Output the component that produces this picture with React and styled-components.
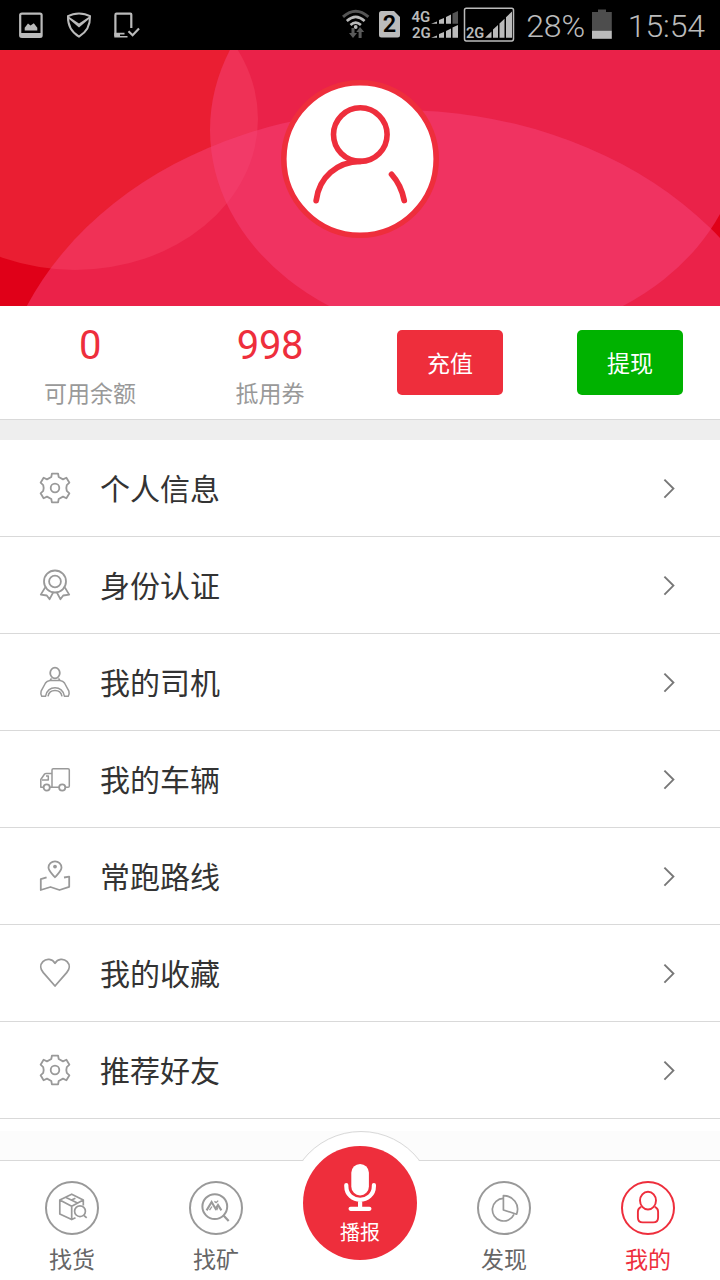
import React from 'react'
import styled, { createGlobalStyle } from 'styled-components'

const GlobalStyle = createGlobalStyle`
    * {
        box-sizing: border-box;
    }
    body {
        margin: 0;
        background-color: #fff;
        font-family: Roboto, 'Noto Sans CJK SC', sans-serif;
    }
    svg {
        display: block;
        flex: none;
    }
`

const Page = styled.div`
    width: 720px;
    height: 1280px;
    display: flex;
    flex-direction: column;
    overflow: hidden;
    background-color: #fff;
`

const StatusBar = styled.div`
    height: 50px;
    flex: none;
    display: flex;
    justify-content: space-between;
    padding: 0 15px 0 16px;
    background-color: #000;
    color: #bbb;
`

const StatusGroup = styled.div`
    display: flex;
    align-items: center;
    gap: 7px;
`

const StatusText = styled.span`
    width: ${props => props.$width}px;
    font-size: 32px;
    font-weight: 360;
    line-height: 50px;
    padding-top: 2px;
    text-align: right;
    white-space: nowrap;
    letter-spacing: -0.1px;
`

const Banner = styled.div`
    position: relative;
    height: 256px;
    flex: none;
    padding-top: 29px;
    display: flex;
    justify-content: center;
    align-items: flex-start;
    background-color: #e00018;
`

const BannerArt = styled.svg`
    position: absolute;
    top: 0;
    left: 0;
`

const Avatar = styled.div`
    position: relative;
    width: 158px;
    height: 160px;
`

const Account = styled.div`
    height: 114px;
    flex: none;
    display: grid;
    grid-template-columns: repeat(4, 180px);
    border-bottom: 1px solid #d9d9d9;
`

const Stat = styled.div`
    display: flex;
    flex-direction: column;
    align-items: center;
    padding-top: 16px;
    strong {
        font-size: 40px;
        font-weight: 400;
        line-height: 47px;
        letter-spacing: -0.3px;
        color: #ee2e3c;
    }
    span {
        margin-top: 9px;
        font-size: 23px;
        line-height: 34px;
        color: #999;
    }
`

const PayButton = styled.button`
    width: 106px;
    height: 65px;
    margin: 24px auto 0;
    padding: 4px 0 0;
    border: none;
    border-radius: 5px;
    background-color: ${props => props.$color};
    color: #fff;
    font-family: inherit;
    font-size: 23px;
    line-height: 61px;
`

const Spacer = styled.div`
    height: 20px;
    flex: none;
    background-color: #eee;
`

const MenuRow = styled.div`
    height: 97px;
    flex: none;
    display: flex;
    align-items: center;
    padding: 0 44px 0 39px;
    border-bottom: 1px solid #d9d9d9;
`

const MenuLabel = styled.span`
    flex: 1;
    margin-left: 29px;
    padding-top: 4px;
    font-size: 30px;
    line-height: 44px;
    color: #333;
`

const Shade = styled.div`
    height: 29px;
    margin-top: 12px;
    flex: none;
    background-color: #fcfcfc;
`

const TabBar = styled.div`
    position: relative;
    height: 120px;
    flex: none;
    display: grid;
    grid-template-columns: repeat(5, 144px);
    border-top: 1px solid #d9d9d9;
    background-color: #fff;
`

const Hump = styled.svg`
    position: absolute;
    left: 296px;
    top: -31px;
`

const Tab = styled.div`
    display: flex;
    flex-direction: column;
    align-items: center;
    padding-top: 20px;
    color: ${props => (props.$active ? '#ee2e3c' : '#666')};
    svg {
        color: ${props => (props.$active ? '#ee2e3c' : '#999')};
    }
    span {
        margin-top: 9px;
        font-size: 23px;
        line-height: 34px;
    }
`

const Broadcast = styled.div`
    position: relative;
    width: 114px;
    height: 114px;
    margin: -15px auto 0;
    border-radius: 50%;
    background-color: #ee2e3c;
    color: #fff;
    display: flex;
    flex-direction: column;
    align-items: center;
    span {
        margin-top: 2px;
        font-size: 20px;
        line-height: 30px;
    }
`

function LineIcon({ children }) {
    return (
        <svg width="32" height="32" viewBox="0 0 32 32" fill="none" stroke="#999" strokeWidth="1.8" strokeLinejoin="round">
            {children}
        </svg>
    )
}

const GearIcon = () => (
    <LineIcon>
        <path d="M12.9 1.7h6.2l.6 3.3 4.3 2.4 3.4-1.7 3 5-2.6 2.4q-1 2.9 0 5.8l2.6 2.4-3 5-3.4-1.7-4.3 2.4-.6 3.3h-6.2l-.6-3.3L8 24.6l-3.4 1.7-3-5 2.6-2.4q1-2.9 0-5.8l-2.6-2.4 3-5L8 7.4 12.3 5z" />
        <circle cx="16" cy="16" r="4.3" />
    </LineIcon>
)

const MedalIcon = () => (
    <LineIcon>
        <circle cx="16" cy="12.5" r="11" />
        <circle cx="16" cy="12.5" r="5.9" />
        <path d="M6.2 18.4 1.8 25.6l6 .9 2.8 3.7 3.6-6.9M25.8 18.4l4.4 7.2-6 .9-2.8 3.7-3.6-6.9" />
    </LineIcon>
)

const DriverIcon = () => (
    <LineIcon>
        <ellipse cx="16" cy="7" rx="4.8" ry="5.3" />
        <path d="M12.5 12.3 11 14.5Q7.8 14.8 6.5 17L2.1 25.2Q1.3 28 2.8 30.3H6.5C8 18.8 24 18.8 25.5 30.3h3.7Q30.7 28 29.9 25.2L25.5 17Q24.2 14.8 21 14.5L19.5 12.3M11 14.5h10M9 30.3C10.5 22.6 21.5 22.6 23 30.3" strokeWidth="1.5" />
    </LineIcon>
)

const TruckIcon = () => (
    <LineIcon>
        <path d="M4.7 24.3H1.8V16.5L5.6 11Q6.2 10.4 7.2 10.4H13M13 24.3V7Q13 5.7 14.3 5.7H29Q30.3 5.7 30.3 7V23Q30.3 24.3 29 24.3H26.4M10.8 24.3H20M7 13H9.3V17H3" strokeWidth="1.5" />
        <circle cx="7.7" cy="24.5" r="3.1" />
        <circle cx="23.2" cy="24.5" r="3.1" />
    </LineIcon>
)

const RouteIcon = () => (
    <LineIcon>
        <path d="M16 17.2C12.5 13 9.5 11 9.5 7.6A6.5 6.2 0 0 1 22.5 7.6C22.5 11 19.5 13 16 17.2zM7.6 17.3 1.8 19.2V30L11.5 27l9 3 9.7-3.2V16.6L25 17.5" />
        <circle cx="16" cy="6.6" r="1.9" fill="#999" stroke="none" />
    </LineIcon>
)

const HeartIcon = () => (
    <LineIcon>
        <path d="M16 6.3C13.3 1.6 7.3 1.2 3.9 4.6 1 7.6 1.1 12 4.3 15.6L16 29 27.7 15.6C30.9 12 31 7.6 28.1 4.6 24.7 1.2 18.7 1.6 16 6.3z" />
    </LineIcon>
)

const Chevron = () => (
    <svg width="14" height="22" viewBox="0 0 14 22" fill="none" stroke="#777" strokeWidth="1.9">
        <path d="M2.4 2.6 11.4 11.6 2.4 20.6" />
    </svg>
)

function TabIcon({ children }) {
    return (
        <svg width="54" height="54" viewBox="0 0 54 54" fill="none" stroke="currentColor" strokeWidth="1.7" strokeLinejoin="round">
            <circle cx="27" cy="27" r="26" strokeWidth="2" />
            {children}
        </svg>
    )
}

const CargoIcon = () => (
    <TabIcon>
        <path d="M38.3 24.5V19L26.7 13.2 14.8 19V33L26.7 38.6 30.5 36.8M14.8 19 26.7 25.2 38.3 19M26.7 25.2V38.6M20.5 16.2 32.5 22M26.6 19 30.4 17.2" />
        <circle cx="35" cy="30.2" r="5.4" />
        <path d="M39 34.5 41.7 36.8" />
    </TabIcon>
)

const MineIcon = () => (
    <TabIcon>
        <circle cx="25.8" cy="25.6" r="12.4" strokeWidth="2" />
        <path d="M34.3 34.3 39.7 40" strokeWidth="2.2" />
        <path d="M17.6 29.4 22.6 21 26.6 27.8 29 24 32.4 29.4" strokeWidth="2.1" strokeLinejoin="miter" />
        <path d="M20.5 29.2 23 25.5M27.6 29.2 28.8 26.5M25.4 20.4 27.2 21.6 29.2 19.6" strokeWidth="1.3" />
    </TabIcon>
)

const PieIcon = () => (
    <TabIcon>
        <path d="M26.4 17.4A11.3 11.3 0 1 0 37 33.3" />
        <path d="M26.4 29V14.6C36 14.6 43.2 23.5 39.6 33.2z" />
    </TabIcon>
)

const MeIcon = () => (
    <TabIcon>
        <ellipse cx="27" cy="19.6" rx="8" ry="8.9" strokeWidth="1.9" />
        <path d="M20.2 26C18 26.8 16.9 28.5 16.9 31V36.5Q16.9 41.4 21.8 41.4H32.2Q37.1 41.4 37.1 36.5V31C37.1 28.5 36 26.8 33.8 26" strokeWidth="1.9" />
    </TabIcon>
)

const MicIcon = () => (
    <svg width="114" height="70" viewBox="0 0 114 70" fill="none" stroke="#fff" strokeWidth="4.2" strokeLinecap="round">
        <rect x="48.3" y="18" width="17.6" height="31.4" rx="8.8" fill="#fff" stroke="none" />
        <path d="M43.3 39V40C43.3 58.3 70.9 58.3 70.9 40V39M57.1 54V62M47.6 62.8H66.4" />
    </svg>
)

/* status bar glyphs, drawn in bar coordinates */
const Glyph = ({ x, w, children }) => (
    <svg width={w} height="50" viewBox={`${x} 0 ${w} 50`} fill="none">
        {children}
    </svg>
)

const NoticeIcons = () => (
    <Glyph x={16} w={126}>
        <path d="M22 13.6H40Q41.6 13.6 41.6 15V35.5Q41.6 36.9 40 36.9H22Q20.2 36.9 20.2 35.5V15Q20.2 13.6 22 13.6z" stroke="#bbb" strokeWidth="2.2" />
        <path d="M20 33H42V37H20zM24.7 30.5V27.8L28 23.6 30.5 25.5 33.8 23.2 37.3 27.8V30.5z" fill="#bbb" />
        <path d="M79 13.4C83 13.4 87 14.4 90 16.2 90.3 25 86.5 32 79 36.6 71.5 32 67.7 25 68 16.2 71 14.4 75 13.4 79 13.4z" stroke="#bbb" strokeWidth="2" />
        <path d="M68.5 16.5 79 23.4 89.5 16.5 89 19 79 27.6 69 19z" fill="#bbb" />
        <path d="M131.3 28V14.5Q131.3 13.7 130.5 13.7H116.5Q115.4 13.7 115.4 15V36.2" stroke="#bbb" strokeWidth="2.2" />
        <path d="M114.3 32.8H124.5V34.4H120V36H127.5V37.6H114.3z" fill="#bbb" />
        <path d="M128.5 31.3 132.6 35.2 139 28.6" stroke="#bbb" strokeWidth="2.2" />
    </Glyph>
)

const SignalIcons = () => (
    <Glyph x={340} w={176}>
        <path d="M343 16.8Q355.7 5.6 368.4 16.8" stroke="#555" strokeWidth="3" />
        <path d="M346.8 21Q355.7 12.8 364.6 21M350.5 25Q355.7 20.2 360.9 25" stroke="#bbb" strokeWidth="2.6" />
        <circle cx="355.7" cy="27" r="1.9" fill="#bbb" />
        <path d="M351.5 28H354.5V33H357L353 38 349 33H351.5zM358.6 38H361.6V32H364.2L360 27 356.3 32H358.6z" fill="#5a5a5a" />
        <path d="M381.5 11H394L400 17V35Q400 37.5 397.5 37.5H381.5Q379 37.5 379 35V13.5Q379 11 381.5 11z" fill="#bbb" />
        <text x="389.5" y="32.2" fill="#000" fontFamily="Roboto" fontWeight="600" fontSize="23.5" textAnchor="middle">2</text>
        <g fill="#bbb" fontFamily="Roboto" fontWeight="600" fontSize="15">
            <text x="411.5" y="21.6">4G</text>
            <text x="412" y="38">2G</text>
            <text x="466" y="38" fontSize="14.6">2G</text>
        </g>
        <path d="M431 23.8 437 21.5V23.8zM439 23.8V20L444 18V23.8zM446 23.8V17L451 14.6V23.8z" fill="#bbb" />
        <path d="M452.5 23.8V13.6L458 11V23.8z" fill="#555" />
        <path d="M431 37.8 437 35.5V37.8zM439 37.8V34L444 32V37.8zM446 37.8V31L451 28.6V37.8zM452.5 37.8V27.6L458 25V37.8z" fill="#bbb" />
        <path d="M485 37.8 491.5 31.4V37.8zM493 37.8V29.6L498 25V37.8zM499.5 37.8V23.6L504.5 18.8V37.8zM506 37.8V17.2L512 11.5V37.8z" fill="#bbb" />
        <rect x="464.5" y="8.3" width="49" height="32.6" rx="1.8" stroke="#bbb" strokeWidth="1.5" />
    </Glyph>
)

const BatteryIcon = () => (
    <Glyph x={592} w={20}>
        <path d="M592 12H598V9.5H606V12H611.8V31H592z" fill="#4d4d4d" />
        <path d="M592 30.8H611.8V38.8H592z" fill="#bbb" />
    </Glyph>
)

const menu = [
    ['个人信息', GearIcon],
    ['身份认证', MedalIcon],
    ['我的司机', DriverIcon],
    ['我的车辆', TruckIcon],
    ['常跑路线', RouteIcon],
    ['我的收藏', HeartIcon],
    ['推荐好友', GearIcon],
]

function App() {
    return (
        <Page>
            <GlobalStyle />
            <StatusBar>
                <NoticeIcons />
                <StatusGroup>
                    <SignalIcons />
                    <StatusText $width={62}>28%</StatusText>
                    <BatteryIcon />
                    <StatusText $width={86}>15:54</StatusText>
                </StatusGroup>
            </StatusBar>
            <Banner>
                <BannerArt width="720" height="256" viewBox="0 0 720 256">
                    <ellipse cx="75" cy="69" rx="183" ry="151" fill="#f33c4c" fillOpacity="0.5" />
                    <ellipse cx="476" cy="80" rx="266" ry="211" fill="#f34379" fillOpacity="0.5" />
                    <ellipse cx="398" cy="381" rx="403" ry="321" fill="#f54379" fillOpacity="0.5" />
                </BannerArt>
                <Avatar>
                    <svg width="158" height="160" viewBox="0 0 158 160" fill="none" stroke="#ee2e3c">
                        <circle cx="79" cy="80" r="76.2" fill="#fff" strokeWidth="5.6" />
                        <circle cx="79.3" cy="55.6" r="26.8" strokeWidth="5.6" />
                        <path d="M35.2 121.5C38 98 56 83 79.3 82.4M110.6 95.4C117 102.5 121.3 111.5 123.2 121.5" strokeWidth="5.8" strokeLinecap="round" />
                    </svg>
                </Avatar>
            </Banner>
            <Account>
                <Stat>
                    <strong>0</strong>
                    <span>可用余额</span>
                </Stat>
                <Stat>
                    <strong>998</strong>
                    <span>抵用券</span>
                </Stat>
                <PayButton $color="#ee2e3c">充值</PayButton>
                <PayButton $color="#00b200">提现</PayButton>
            </Account>
            <Spacer />
            {menu.map(([label, Icon]) => (
                <MenuRow key={label}>
                    <Icon />
                    <MenuLabel>{label}</MenuLabel>
                    <Chevron />
                </MenuRow>
            ))}
            <Shade />
            <TabBar>
                <Hump width="130" height="40" viewBox="0 0 130 40">
                    <path d="M4 40V31.5H6.5A73.5 73.5 0 0 1 123.5 31.5H126V40z" fill="#fff" />
                    <path d="M4 30.5H6.5A73.5 73.5 0 0 1 123.5 30.5H126" fill="none" stroke="#d9d9d9" />
                </Hump>
                <Tab>
                    <CargoIcon />
                    <span>找货</span>
                </Tab>
                <Tab>
                    <MineIcon />
                    <span>找矿</span>
                </Tab>
                <Broadcast>
                    <MicIcon />
                    <span>播报</span>
                </Broadcast>
                <Tab>
                    <PieIcon />
                    <span>发现</span>
                </Tab>
                <Tab $active>
                    <MeIcon />
                    <span>我的</span>
                </Tab>
            </TabBar>
        </Page>
    )
}

export default App
